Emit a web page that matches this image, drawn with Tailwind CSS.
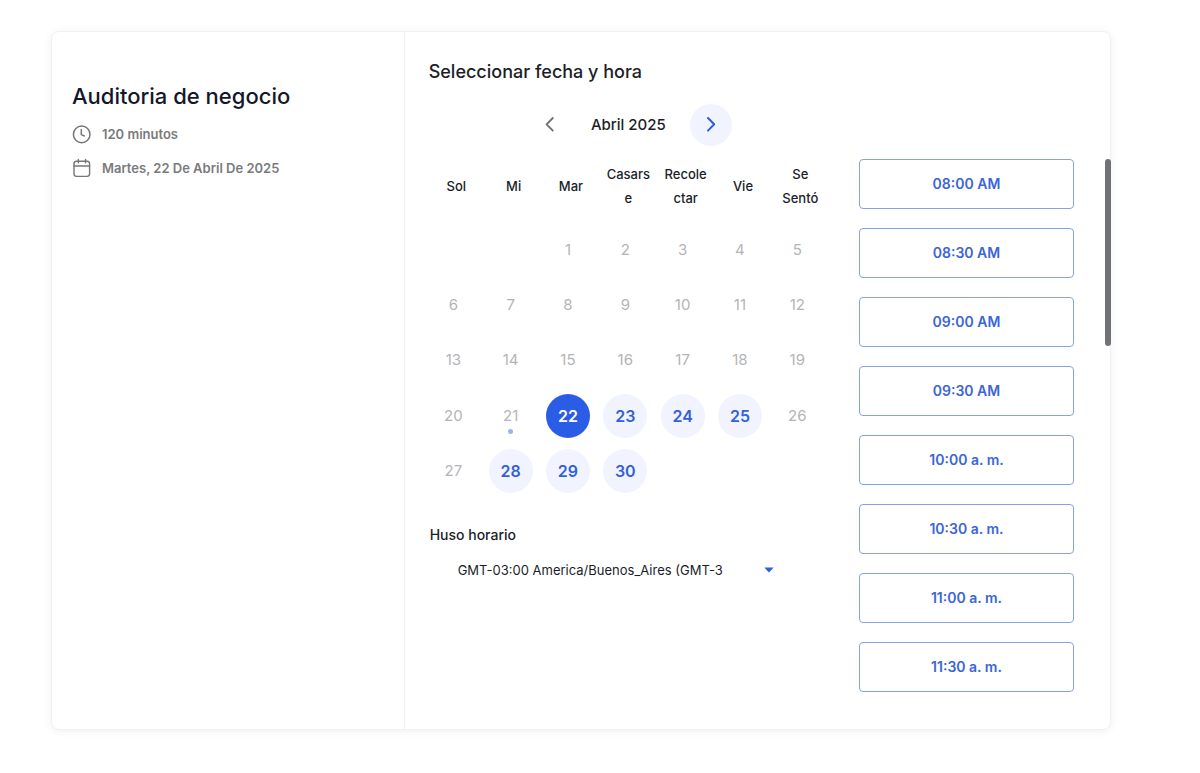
<!DOCTYPE html>
<html lang="es">
<head>
<meta charset="utf-8">
<meta name="viewport" content="width=device-width, initial-scale=1">
<title>Auditoria de negocio</title>
<script src="https://cdn.jsdelivr.net/npm/@tailwindcss/browser@4"></script>
</head>
<body class="bg-white font-['Inter',sans-serif] text-[#1b1e29]">
<main class="ml-[51px] mr-[89px] mt-[31px] mb-10 flex rounded-lg border border-[#f1f1f1] bg-white shadow-[0_1px_8px_1px_rgba(0,0,0,0.05)]">
  <aside class="w-1/3 border-r border-[#eeeeee] pl-5 pr-5 pt-12">
    <h1 class="text-[22px] leading-8 font-medium text-[#14172a]">Auditoria de negocio</h1>
    <ul class="mt-3 flex flex-col gap-[14px] text-[13px] leading-5 font-semibold text-[#7a7a7d]">
      <li class="flex items-center gap-[10px]">
        <svg class="size-5" viewBox="0 0 20 20" fill="none" stroke="#77777a" stroke-width="1.5" stroke-linecap="round" stroke-linejoin="round" aria-hidden="true"><circle cx="9.7" cy="10.4" r="8.3"/><path d="M9.300 5.600v5l3.100 1.400"/></svg>
        <span>120 minutos</span>
      </li>
      <li class="flex items-center gap-[10px]">
        <svg class="size-5" viewBox="0 0 20 20" fill="none" stroke="#77777a" stroke-width="1.4" stroke-linecap="round" stroke-linejoin="round" aria-hidden="true"><rect x="2" y="3.200" width="15.600" height="15.200" rx="2.600"/><path d="M2 8h15.600M6.300 1.500v3.200M13.500 1.500v3.200"/></svg>
        <span>Martes, 22 De Abril De 2025</span>
      </li>
    </ul>
  </aside>

  <section class="flex-1 pb-[37px] pl-6 pt-7">
    <h2 class="text-[18px] leading-6 font-medium">Seleccionar fecha y hora</h2>
    <div class="flex items-start">
      <div class="-ml-px min-w-0 flex-1 pr-[30px]">
        <div class="mt-5 flex items-center justify-center pl-1">
          <button type="button" aria-label="Mes anterior" class="flex size-[42px] items-center justify-center rounded-full text-[#6f6f73]">
            <svg class="size-5" viewBox="0 0 20 20" fill="none" stroke="currentColor" stroke-width="1.8" stroke-linecap="round" stroke-linejoin="round" aria-hidden="true"><path d="M12.800 3 6.600 9.300l6.200 6.300"/></svg>
          </button>
          <h3 class="ml-5 mr-6 text-[15px] leading-6 font-medium">Abril 2025</h3>
          <button type="button" aria-label="Mes siguiente" class="flex size-[42px] items-center justify-center rounded-full bg-[#f1f4ff] text-[#2c5be5]">
            <svg class="size-5" viewBox="0 0 20 20" fill="none" stroke="currentColor" stroke-width="2" stroke-linecap="round" stroke-linejoin="round" aria-hidden="true"><path d="m7 3 6.200 6.300L7 15.600"/></svg>
          </button>
        </div>
        <table class="mt-1 h-[349px] w-full table-fixed border-collapse text-center">
          <thead>
            <tr class="h-[72px] text-[13px] leading-6">
              <th class="px-[6px] font-medium wrap-break-word">Sol</th><th class="px-[6px] font-medium wrap-break-word">Mi</th><th class="px-[6px] font-medium wrap-break-word">Mar</th><th class="px-[6px] font-medium wrap-break-word">Casarse</th><th class="px-[6px] font-medium wrap-break-word">Recolectar</th><th class="px-[6px] font-medium wrap-break-word">Vie</th><th class="px-[6px] font-medium wrap-break-word">Se Sentó</th>
            </tr>
          </thead>
          <tbody id="days" class="leading-6"></tbody>
        </table>
        <div class="ml-[2px]">
          <label for="tz" class="mt-6 block text-[14px] leading-6 font-medium">Huso horario</label>
          <div class="mt-[11px] flex items-center pl-7">
            <select id="tz" class="w-[300px] appearance-none bg-transparent text-[13px] leading-6 outline-none"><option>GMT-03:00 America/Buenos_Aires (GMT-3</option></select>
            <svg class="pointer-events-none ml-[6px] h-[6px] w-[10px]" viewBox="0 0 10 6" aria-hidden="true"><path d="M.300.400h9.400L5 5.600z" fill="#2f5fe0"/></svg>
          </div>
        </div>
      </div>
      <div class="relative mt-[75px] w-[251px] shrink-0">
        <div id="times" class="flex flex-col gap-[19px] pr-9"></div>
        <div class="absolute -right-px top-0 h-[187px] w-[6px] rounded-full bg-[#707276]"></div>
      </div>
    </div>
  </section>
</main>
<script>
const open = [22,23,24,25,28,29,30];
let html = '';
for (let w = 0; w < 5; w++) {
  html += '<tr>';
  for (let d = 0; d < 7; d++) {
    const n = w * 7 + d - 1;
    let cell = '';
    if (n >= 1 && n <= 30) {
      const base = 'relative inline-flex size-11 items-center justify-center rounded-full align-middle ';
      const look = n === 22 ? 'bg-[#2b5ce6] text-[16px] font-semibold text-white'
        : open.includes(n) ? 'bg-[#f1f4ff] text-[16px] font-semibold text-[#355fd8]'
        : 'text-[15px] text-[#b4b4b7]';
      const dot = n === 21 ? '<span class="absolute bottom-1 left-[19px] size-[5px] rounded-full bg-[#9db1f0]"></span>' : '';
      cell = `<button type="button" class="${base}${look}"${open.includes(n) ? '' : ' disabled'}>${n}${dot}</button>`;
    }
    html += `<td class="p-0 pr-[6px]">${cell}</td>`;
  }
  html += '</tr>';
}
document.getElementById('days').innerHTML = html;
document.getElementById('times').innerHTML = ['08:00 AM','08:30 AM','09:00 AM','09:30 AM','10:00 a. m.','10:30 a. m.','11:00 a. m.','11:30 a. m.']
  .map(t => `<button type="button" class="h-[50px] w-full rounded-[4px] border border-[#88a1e2] text-[14px] leading-6 font-semibold text-[#3b65d9]">${t}</button>`).join('');
</script>
</body>
</html>
